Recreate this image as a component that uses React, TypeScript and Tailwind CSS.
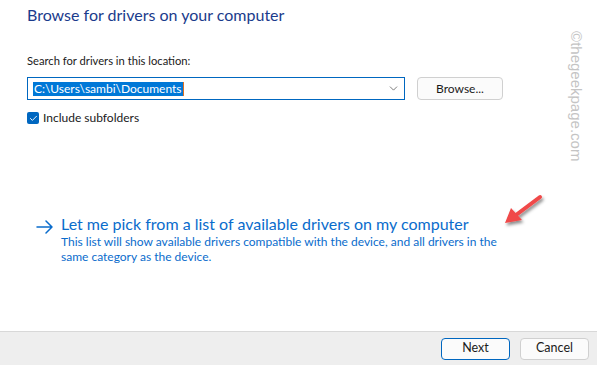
import React from 'react';
import { ChevronDown, Check } from 'lucide-react';

const font = { fontFamily: 'Lato, "Noto Sans", sans-serif' };

const RedArrow: React.FC = () => (
  <svg
    className="absolute left-[496px] top-[188px]"
    width="56"
    height="46"
    viewBox="0 0 56 46"
  >
    <defs>
      <filter id="sh" x="-30%" y="-30%" width="160%" height="160%">
        <feDropShadow dx="1.5" dy="2.5" stdDeviation="1.5" floodColor="#000" floodOpacity="0.45" />
      </filter>
    </defs>
    <g filter="url(#sh)">
      <line x1="44" y1="9" x2="20" y2="27" stroke="#f04848" strokeWidth="4" strokeLinecap="round" />
      <polygon points="9,35 15,20 26,32" fill="#f04848" />
    </g>
  </svg>
);

export default function App() {
  return (
    <div className="relative w-[597px] h-[365px] flex flex-col bg-white overflow-hidden" style={font}>
      <div className="flex-1 flex flex-col pl-[27px]">
        <h1 className="text-[16px] leading-[22px] mt-[4px] text-[#1a3b8c]">Browse for drivers on your computer</h1>

        <p className="text-[11.2px] leading-[16px] mt-[27px] text-[#1a1a1a]">Search for drivers in this location:</p>

        <div className="flex items-center mt-[8px] gap-[12px]">
          <div className="w-[378px] h-[23px] border border-[#0067c0] flex items-center pl-[5px] pr-[4px]">
            <span className="bg-[#0078d7] text-white text-[12px] leading-[14px] px-[1px]">C:\Users\sambi\Documents</span>
            <span className="w-[1px] h-[14px] bg-[#e07020]" />
            <div className="flex-1" />
            <ChevronDown size={13} strokeWidth={1.4} className="text-[#555]" />
          </div>
          <button className="w-[86px] h-[23px] rounded-[4px] border border-[#d0d0d0] bg-[#fbfbfb] text-[12px] text-[#1a1a1a]">
            Browse...
          </button>
        </div>

        <label className="flex items-center mt-[11px] gap-[4px]">
          <span className="w-[12px] h-[12px] rounded-[2px] bg-[#0067c0] flex items-center justify-center">
            <Check size={9} strokeWidth={2.5} className="text-white" />
          </span>
          <span className="text-[12px] leading-[14px] text-[#1a1a1a]">Include subfolders</span>
        </label>

        <div className="flex mt-[89px] pl-[9px] text-[#0a6ccc]">
          <svg width="17" height="14" viewBox="0 0 17 14" className="mt-[6px] mr-[8px]" fill="none" stroke="currentColor" strokeWidth="1.5" strokeLinecap="round" strokeLinejoin="round">
            <path d="M1 7h15M10 1l6 6-6 6" />
          </svg>
          <div className="flex flex-col">
            <span className="text-[16px] leading-[20px]">Let me pick from a list of available drivers on my computer</span>
            <span className="text-[12px] leading-[15px]">
              This list will show available drivers compatible with the device, and all drivers in the
              <br />
              same category as the device.
            </span>
          </div>
        </div>
      </div>

      <div className="h-[34px] border-t border-[#d8d8d8] bg-[#eeeeee] flex items-center justify-end gap-[10px] pr-[8px]">
        <button className="w-[69px] h-[22px] rounded-[4px] border border-[#0067c0] bg-[#fbfbfb] text-[12.5px] text-[#1a1a1a]">
          Next
        </button>
        <button className="w-[69px] h-[22px] rounded-[4px] border border-[#d0d0d0] bg-[#fbfbfb] text-[12.5px] text-[#1a1a1a]">
          Cancel
        </button>
      </div>

      <div className="absolute left-[566px] top-[24px] w-[20px] h-[145px] flex items-center justify-center">
        <span
          className="block whitespace-nowrap rotate-90 text-[15px] text-[#c4c4c4]"
          style={{ fontFamily: '"Liberation Sans", Arial, sans-serif' }}
        >
          ©thegeekpage.com
        </span>
      </div>

      <RedArrow />
    </div>
  );
}
